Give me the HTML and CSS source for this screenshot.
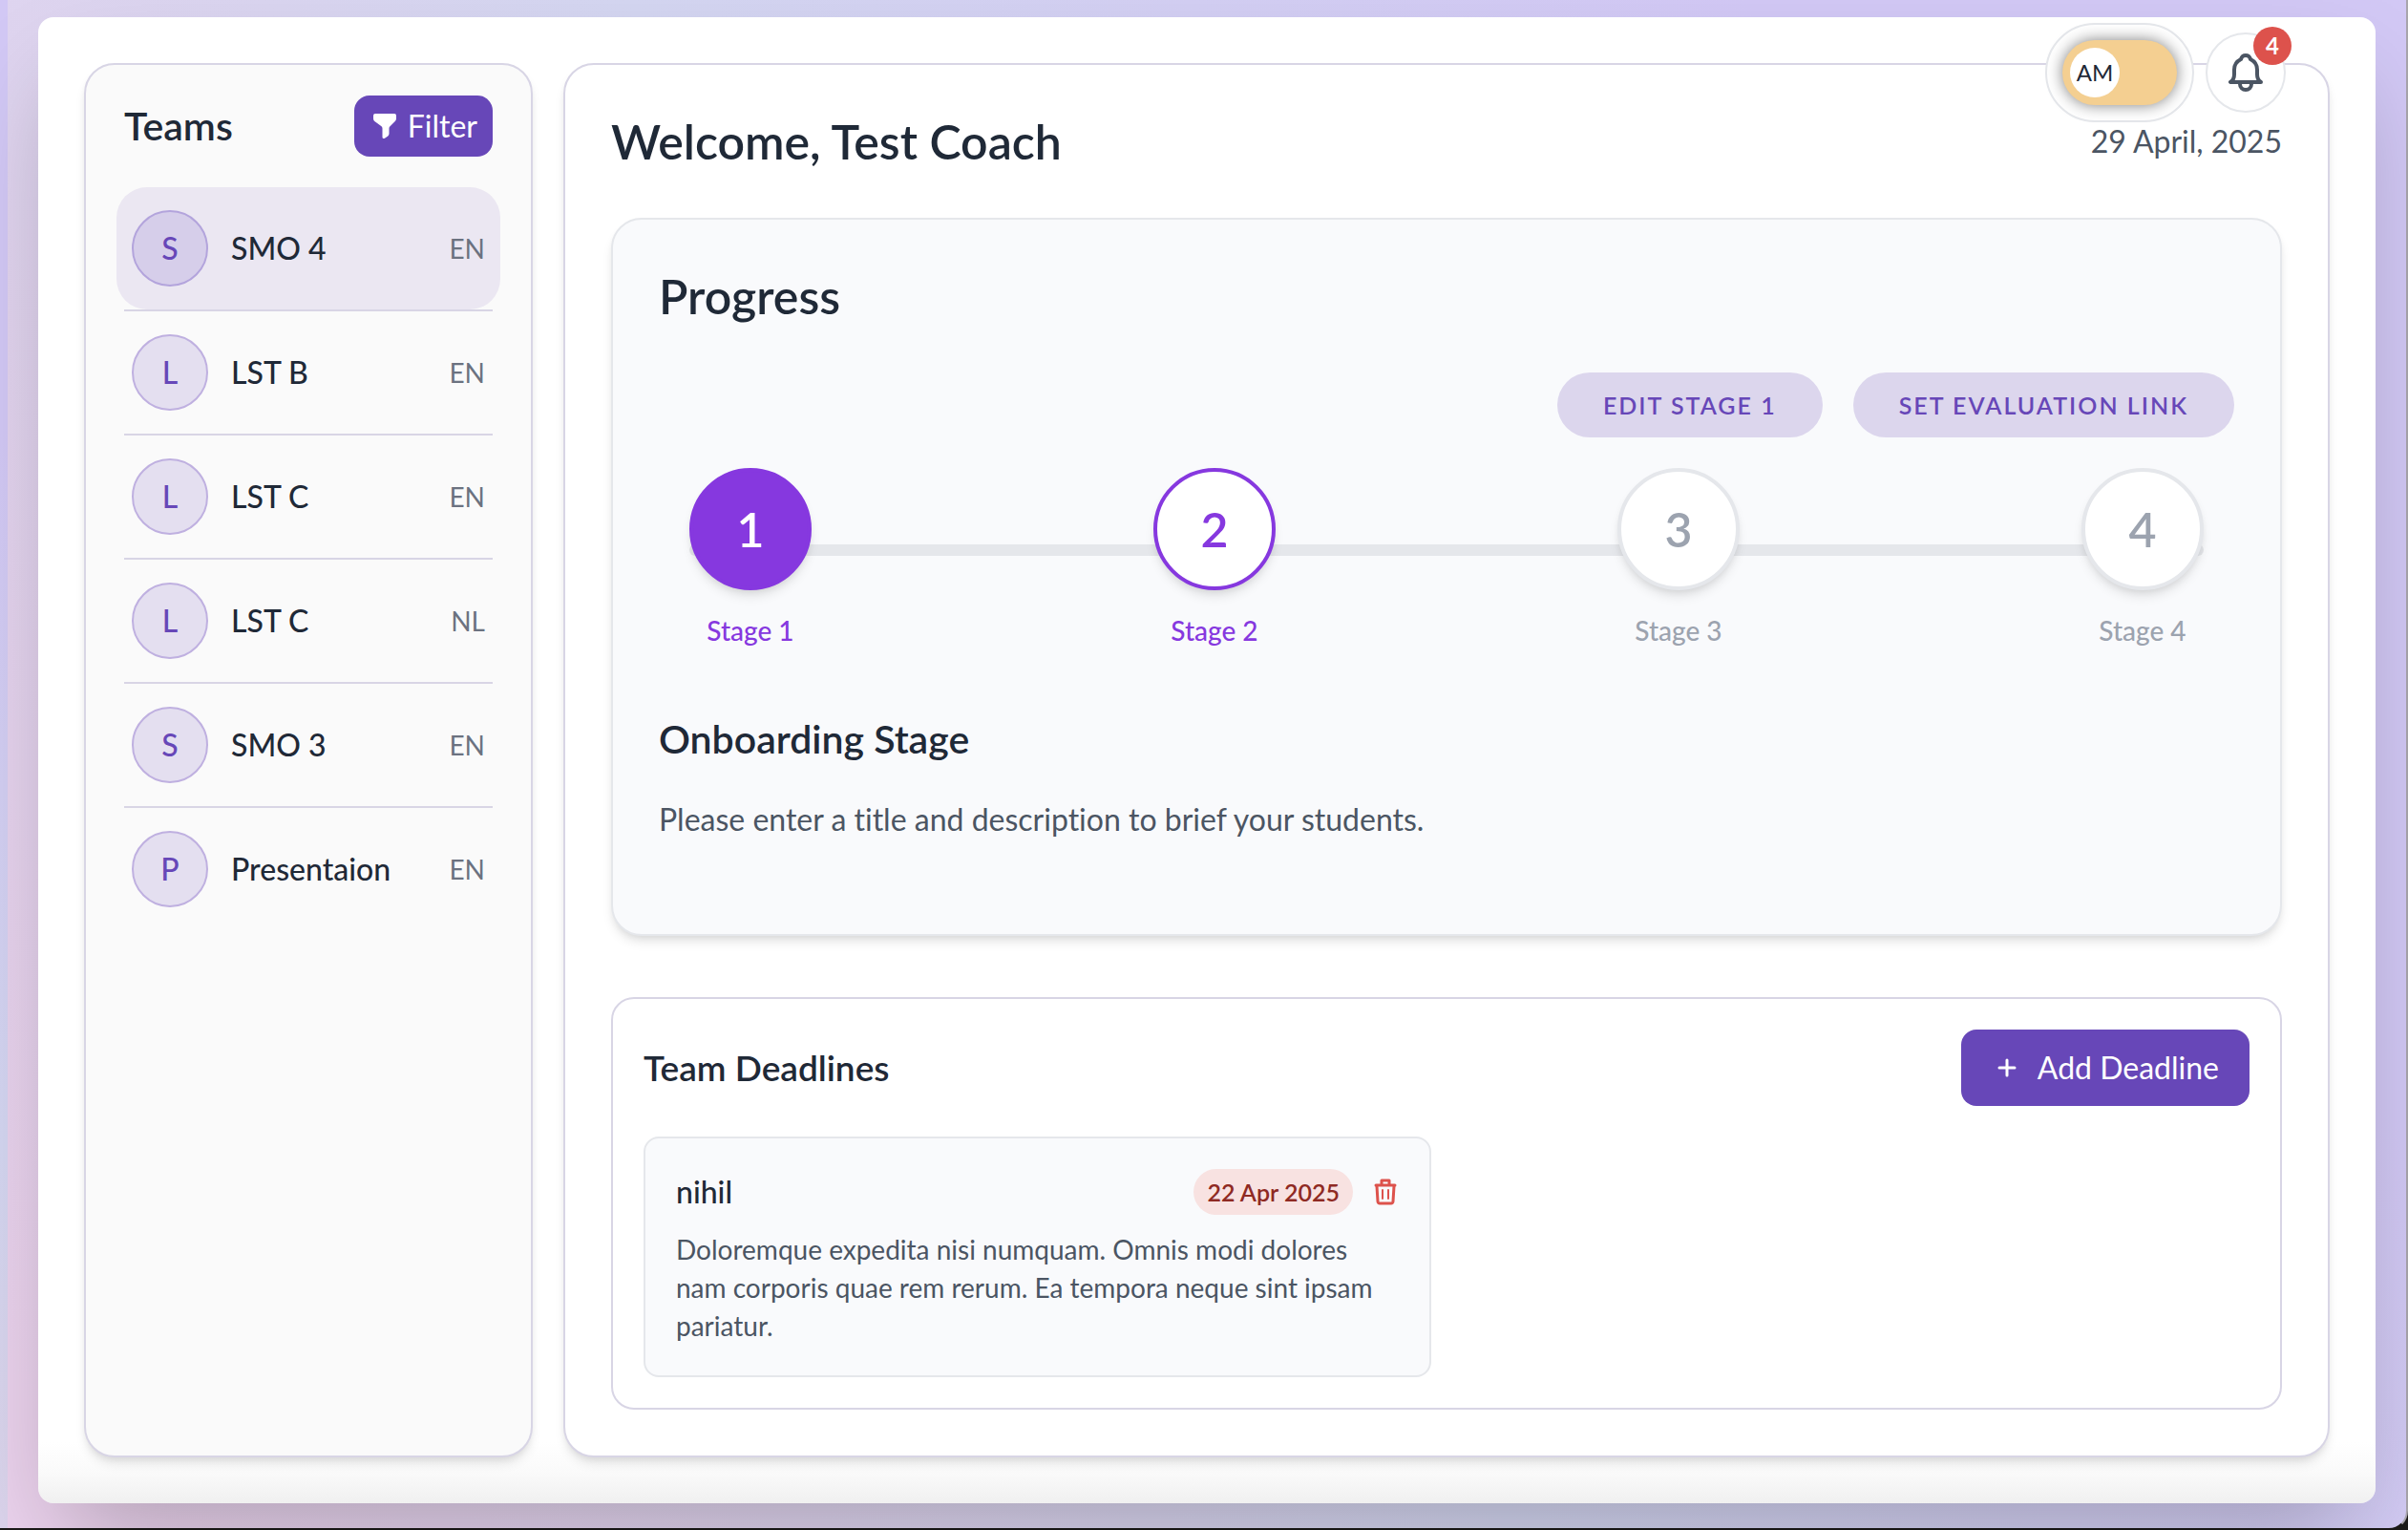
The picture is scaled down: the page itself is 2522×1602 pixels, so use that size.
FILE: index.html
```
<!DOCTYPE html>
<html lang="en">
<head>
    <meta charset="UTF-8">
    <meta name="viewport" content="width=device-width, initial-scale=1.0">
    <title>Coach Dashboard</title>
    <link rel="stylesheet" href="styles.css">
</head>
<body>

<div class="page">
    <div class="controls">
        <div class="mode-pill">
            <label class="mode-toggle">
                <input type="checkbox" class="mode-input" id="modeToggle">
                <span class="mode-knob" id="modeLabel">AM</span>
            </label>
        </div>
        <button class="bell" type="button" aria-label="Notifications">
            <svg width="36" height="40" viewBox="0 0 36 40" fill="none" stroke="currentColor" stroke-width="4" stroke-linecap="round" stroke-linejoin="round">
                <path d="M2 30h32c-3-2-4-5-4-8v-5c0-5-3-9-7-11-1-3-2-4-5-4s-4 1-5 4c-4 2-7 6-7 11v5c0 3-1 6-4 8z"/>
                <path d="M12 32a6 6 0 0 0 12 0"/>
            </svg>
            <span class="bell-badge">4</span>
        </button>
    </div>

    <div class="shell">
        <aside class="sidebar">
            <div class="sidebar-header">
                <h2>Teams</h2>
                <button class="btn btn-filter" type="button">
                    <svg width="24" height="28" viewBox="0 0 24 28" fill="currentColor">
                        <path d="M2 1h20a2 2 0 0 1 2 2v3c0 1-.3 2-1 2.700l-5.500 5.500c-.7.7-1 1.200-1 2V22c0 1-.4 1.800-1.200 2.400L12 26.700c-1 .8-2.500.2-2.500-1.200V16.500c0-.9-.3-1.600-1-2.300L1 8.700C.3 8 0 7 0 6V3a2 2 0 0 1 2-2z"/>
                    </svg>
                    Filter
                </button>
            </div>
            <ul class="team-list">
                <li><a href="#" class="team active"><span class="avatar">S</span><span class="team-name">SMO 4</span><span class="team-lang">EN</span></a></li>
                <li><a href="#" class="team"><span class="avatar">L</span><span class="team-name">LST B</span><span class="team-lang">EN</span></a></li>
                <li><a href="#" class="team"><span class="avatar">L</span><span class="team-name">LST C</span><span class="team-lang">EN</span></a></li>
                <li><a href="#" class="team"><span class="avatar">L</span><span class="team-name">LST C</span><span class="team-lang">NL</span></a></li>
                <li><a href="#" class="team"><span class="avatar">S</span><span class="team-name">SMO 3</span><span class="team-lang">EN</span></a></li>
                <li><a href="#" class="team"><span class="avatar">P</span><span class="team-name">Presentaion</span><span class="team-lang">EN</span></a></li>
            </ul>
        </aside>

        <main class="main">
            <header class="main-header">
                <h1>Welcome, Test Coach</h1>
                <time class="today" datetime="2025-04-29">29 April, 2025</time>
            </header>

            <section class="progress">
                <h2 class="progress-title">Progress</h2>
                <div class="progress-actions">
                    <button class="btn-soft" type="button">EDIT STAGE 1</button>
                    <button class="btn-soft" type="button">SET EVALUATION LINK</button>
                </div>
                <ol class="stages">
                    <li class="stage current"><span class="stage-dot">1</span><span class="stage-label">Stage 1</span></li>
                    <li class="stage open"><span class="stage-dot">2</span><span class="stage-label">Stage 2</span></li>
                    <li class="stage"><span class="stage-dot">3</span><span class="stage-label">Stage 3</span></li>
                    <li class="stage"><span class="stage-dot">4</span><span class="stage-label">Stage 4</span></li>
                </ol>
                <h3 class="stage-title">Onboarding Stage</h3>
                <p class="stage-text">Please enter a title and description to brief your students.</p>
            </section>

            <section class="deadlines">
                <div class="deadlines-header">
                    <h2>Team Deadlines</h2>
                    <button class="btn btn-add" type="button">
                        <svg width="32" height="32" viewBox="0 0 32 32" fill="none" stroke="currentColor" stroke-width="3" stroke-linecap="round">
                            <path d="M16 8v16M8 16h16"/>
                        </svg>
                        Add Deadline
                    </button>
                </div>
                <div class="deadline-grid">
                    <article class="deadline">
                        <div class="deadline-top">
                            <h3>nihil</h3>
                            <span class="due">22 Apr 2025</span>
                            <button class="trash" type="button" aria-label="Delete">
                                <svg width="24" height="28" viewBox="0 0 24 28" fill="none" stroke="currentColor" stroke-width="2" stroke-linecap="round" stroke-linejoin="round">
                                    <path stroke-width="3" d="M2 7h20M8 6V2h8v4"/>
                                    <path stroke-width="3" d="M3 8l1 16c0 1 1 2 2 2h12c1 0 2-1 2-2l1-16"/>
                                    <path d="M9 12v9M15 12v9"/>
                                </svg>
                            </button>
                        </div>
                        <p>Doloremque expedita nisi numquam. Omnis modi dolores nam corporis quae rem rerum. Ea tempora neque sint ipsam pariatur.</p>
                    </article>
                </div>
            </section>
        </main>
    </div>
</div>

<script>
    document.getElementById('modeToggle').addEventListener('change', (e) => {
        document.getElementById('modeLabel').textContent = e.target.checked ? 'PM' : 'AM';
    });
</script>
</body>
</html>
```
FILE: styles.css
```
:root {
    --purple: #6747b8;
    --violet: #8638df;
    --dark: #1f2937;
    --grey: #4b5563;
    --muted: #6b7280;
    --line: #d8d5e5;
    --border: #e5e7eb;
    --panel: #f9fafc;
    --shadow: 0 8px 12px -2px rgba(0, 0, 0, 0.1), 0 4px 8px -4px rgba(0, 0, 0, 0.1);
}
* {
    box-sizing: border-box;
}
body {
    margin: 0;
    background: #1b1a18;
    color: var(--dark);
    font-family: Lato, "Liberation Sans", sans-serif;
    font-size: 32px;
    line-height: 48px;
    font-variant-ligatures: none;
}
h1, h2, h3, p, ul, ol {
    margin: 0;
    padding: 0;
}
h1, h2, h3 {
    font-weight: 600;
}
ul, ol {
    list-style: none;
}
button {
    border: 0;
    margin: 0;
    font: inherit;
    font-variant-ligatures: none;
    color: inherit;
    cursor: pointer;
}
svg {
    display: block;
    flex: none;
}

.page {
    position: relative;
    display: flex;
    min-height: 100vh;
    padding: 18px 32px 26px 40px;
    border-right: 2px solid #a8a5ac;
    border-bottom: 2px solid #1b1a18;
    border-bottom-right-radius: 20px;
    /* 8px gutter on the left, then the page gradient */
    background:
        linear-gradient(#d2c8f5 28%, #d4d6f1 75%, #dcd4ec) left / 8px 100% no-repeat,
        linear-gradient(60deg, #ebd2ed 3%, #d4d6f1 46%, #d2c8f5 80%);
}
.shell {
    flex: 1;
    display: grid;
    grid-template-columns: 470px 1fr;
    gap: 32px;
    padding: 48px;
    border-radius: 16px;
    background: linear-gradient(to top, #f0f0f0, #fafafa 32px, #fff 64px);
    box-shadow: 0 50px 100px -24px rgba(0, 0, 0, 0.25);
}

/* floating controls */
.controls {
    position: absolute;
    top: 24px;
    right: 126px;
    display: flex;
    align-items: center;
    gap: 12px;
}
.mode-pill {
    padding: 16px;
    border: 2px solid var(--border);
    border-radius: 52px;
    background: #fff;
}
.mode-toggle {
    position: relative;
    display: block;
}
.mode-input {
    appearance: none;
    display: block;
    width: 120px;
    height: 68px;
    margin: 0;
    border-radius: 34px;
    background: #f4cf91;
    box-shadow: 0 0 16px rgba(0, 0, 0, 0.5);
    cursor: pointer;
}
.mode-knob {
    position: absolute;
    top: 8px;
    left: 8px;
    width: 52px;
    height: 52px;
    border-radius: 50%;
    background: #fff;
    font-size: 24px;
    line-height: 52px;
    text-align: center;
}
.mode-input:checked + .mode-knob {
    left: 60px;
}
.bell {
    position: relative;
    display: flex;
    align-items: center;
    justify-content: center;
    width: 84px;
    height: 84px;
    padding: 0;
    border: 2px solid var(--border);
    border-radius: 50%;
    background: #fff;
    color: var(--grey);
}
.bell-badge {
    position: absolute;
    top: -8px;
    right: -8px;
    width: 40px;
    height: 40px;
    border-radius: 50%;
    background: #dd524c;
    color: #fff;
    font-size: 24px;
    font-weight: 700;
    line-height: 40px;
}

/* sidebar */
.sidebar {
    padding: 32px 40px;
    border: 2px solid var(--line);
    border-radius: 32px;
    background: #fafafa;
    box-shadow: var(--shadow);
}
.sidebar-header {
    display: flex;
    align-items: center;
    justify-content: space-between;
    margin-bottom: 32px;
}
.sidebar-header h2 {
    font-size: 41px;
}
.btn {
    display: flex;
    align-items: center;
    gap: 16px;
    border-radius: 16px;
    background: var(--purple);
    color: #fff;
}
.btn-filter {
    gap: 12px;
    padding: 8px 16px 8px 20px;
}
.team-list li + li {
    border-top: 2px solid var(--line);
}
.team {
    display: flex;
    align-items: center;
    gap: 24px;
    padding: 24px 8px;
    color: var(--dark);
    text-decoration: none;
}
.team.active {
    margin: 0 -8px;
    padding: 24px 16px;
    border-radius: 32px;
    background: #ebe7f2;
}
.avatar {
    width: 80px;
    height: 80px;
    border: 2px solid #bfb0e0;
    border-radius: 50%;
    background: #e4dff0;
    color: var(--purple);
    font-weight: 500;
    line-height: 76px;
    text-align: center;
}
.active .avatar {
    border-color: #b3a4dc;
    background: #d6ceea;
}
.team-name {
    flex: 1;
    font-weight: 500;
}
.team-lang {
    color: var(--muted);
    font-size: 28px;
}

/* main column */
.main {
    padding: 48px;
    border: 2px solid var(--line);
    border-radius: 32px;
    background: #fff;
    box-shadow: var(--shadow);
}
.main-header {
    display: flex;
    align-items: center;
    justify-content: space-between;
    margin-bottom: 48px;
}
.main-header h1,
.progress-title {
    font-size: 50px;
    line-height: 64px;
}
.today {
    color: var(--grey);
}

.progress {
    padding: 48px 48px 96px;
    border: 2px solid var(--border);
    border-radius: 32px;
    background: var(--panel);
    box-shadow: var(--shadow);
}
.progress-actions {
    display: flex;
    justify-content: flex-end;
    gap: 32px;
    margin: 48px 0 32px;
}
.btn-soft {
    padding: 10px 48px;
    border-radius: 34px;
    background: #dcd6ed;
    color: var(--purple);
    font-size: 25px;
    font-weight: 600;
    letter-spacing: 2px;
}
.stages {
    position: relative;
    display: flex;
    justify-content: space-between;
    margin: 0 32px 66px;
}
.stages::before {
    content: "";
    position: absolute;
    top: 80px;
    left: 0;
    right: 0;
    height: 12px;
    border-radius: 6px;
    background: var(--border);
}
.stage {
    position: relative;
    width: 128px;
    color: #9ca3af;
    text-align: center;
}
.stage-dot {
    display: block;
    height: 128px;
    margin-bottom: 22px;
    border: 4px solid var(--border);
    border-radius: 50%;
    background: #fff;
    box-shadow: var(--shadow);
    font-size: 50px;
    font-weight: 600;
    line-height: 120px;
}
.stage-label {
    display: block;
    font-size: 28px;
    font-weight: 500;
    line-height: 40px;
}
.current, .open {
    color: var(--violet);
}
.current .stage-dot,
.open .stage-dot {
    border-color: var(--violet);
}
.current .stage-dot {
    background: var(--violet);
    color: #fff;
}
.stage-title {
    font-size: 41px;
    line-height: 56px;
    margin-bottom: 32px;
}
.stage-text {
    color: var(--grey);
}

/* deadlines */
.deadlines {
    margin-top: 64px;
    padding: 32px;
    border: 2px solid var(--line);
    border-radius: 24px;
}
.deadlines-header {
    display: flex;
    align-items: center;
    justify-content: space-between;
    margin-bottom: 32px;
}
.deadlines-header h2 {
    font-size: 37px;
}
.btn-add {
    padding: 16px 32px;
}
.deadline-grid {
    display: grid;
    grid-template-columns: repeat(2, 1fr);
    gap: 32px;
}
.deadline {
    padding: 32px;
    border: 2px solid var(--border);
    border-radius: 16px;
    background: var(--panel);
}
.deadline-top {
    display: flex;
    align-items: center;
    gap: 20px;
    margin-bottom: 16px;
}
.deadline-top h3 {
    flex: 1;
    font-size: 32px;
    font-weight: 500;
}
.due {
    padding: 0 14px;
    border-radius: 24px;
    background: #f8e2e1;
    color: #8f2a23;
    font-size: 25px;
    font-weight: 600;
}
.trash {
    padding: 0 2px;
    background: none;
    color: #dd524c;
}
.deadline p {
    color: var(--grey);
    font-size: 28px;
    line-height: 40px;
}
```
